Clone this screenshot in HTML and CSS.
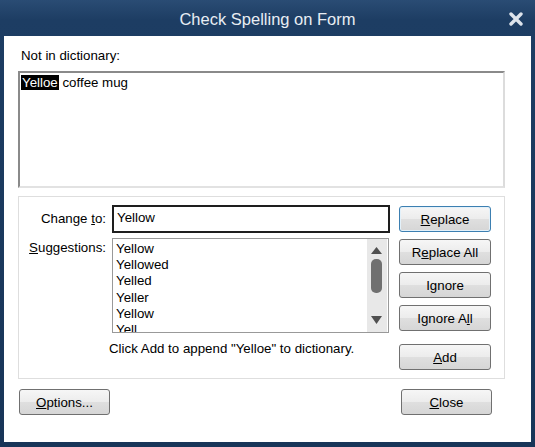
FILE: index.html
```html
<html>
	<head>
		<title>Check Spelling on Form</title>
		<link rel="stylesheet" href="styles.css">
	</head>
	<body>
		<div class="window">
			<div class="titlebar">
				<span></span>
				<span class="title">Check Spelling on Form</span>
				<svg class="close-x" width="16" height="14" viewBox="0 0 16 14">
					<path d="M3 2 L13 12 M13 2 L3 12" stroke="#dde3eb" stroke-width="3.4" stroke-linecap="round"/>
				</svg>
			</div>
			<div class="client">
				<div class="label-top">Not in dictionary:</div>
				<div class="sentence-box"><span class="hl">Yelloe</span> coffee mug</div>
				<div class="group">
					<div class="form-grid">
						<label class="lbl lbl-change">Change <u>t</u>o:</label>
						<div class="change-input">Yellow</div>
						<label class="lbl lbl-sugg"><u>S</u>uggestions:</label>
						<div class="sugg-list">
							<ul>
								<li>Yellow</li>
								<li>Yellowed</li>
								<li>Yelled</li>
								<li>Yeller</li>
								<li>Yellow</li>
								<li>Yell</li>
							</ul>
							<svg class="scrollbar" width="20" height="93" viewBox="0 0 20 93">
								<rect x="0" y="0" width="20" height="93" fill="#e8e8e8"/>
								<polygon points="4,15 9.5,8 15,15" fill="#505050"/>
								<rect x="4" y="20" width="11" height="34" rx="5" fill="#707070"/>
								<polygon points="4,77 15,77 9.5,85" fill="#505050"/>
							</svg>
						</div>
						<span></span>
						<div class="hint">Click Add to append "Yelloe" to dictionary.</div>
					</div>
					<div class="btn-col">
						<button class="btn btn-default"><u>R</u>eplace</button>
						<button class="btn">R<u>e</u>place All</button>
						<button class="btn">I<u>g</u>nore</button>
						<button class="btn">Ignore A<u>l</u>l</button>
						<button class="btn btn-add"><u>A</u>dd</button>
					</div>
				</div>
				<div class="bottom-row">
					<button class="btn btn-options"><u>O</u>ptions...</button>
					<button class="btn btn-close"><u>C</u>lose</button>
				</div>
			</div>
		</div>
	</body>
</html>
```

FILE: styles.css
```css
* {
	margin: 0;
	padding: 0;
	box-sizing: border-box;
}
body {
	background-color: #1b3a5e;
	font-family: "Liberation Sans", Arial, sans-serif;
	font-size: 13.3px;
	color: #000;
}
.window {
	width: 535px;
	height: 447px;
	background: linear-gradient(#2a4c74 0px, #1d3d63 20px, #183558 100%);
}
.titlebar {
	height: 36px;
	display: grid;
	grid-template-columns: 1fr auto 1fr;
	align-items: center;
	padding-top: 2px;
}
.title {
	color: #e8edf3;
	font-size: 16.5px;
}
.close-x {
	justify-self: end;
	margin-right: 11px;
}
.client {
	margin-left: 4px;
	width: 527px;
	height: 406px;
	background-color: #fff;
	padding: 12px 26px 0 14px;
}
.label-top {
	line-height: 16px;
	padding-left: 3px;
	margin-bottom: 7px;
}
.sentence-box {
	height: 117px;
	border: 2px solid #8a8a8a;
	border-right-color: #dcdcdc;
	border-bottom-color: #e2e2e2;
	padding: 2px 1px;
	line-height: 16px;
}
.hl {
	background-color: #000;
	color: #fff;
	padding: 0 1px;
}
.group {
	margin-top: 8px;
	height: 183px;
	border: 1px solid #dedede;
	display: flex;
	padding: 8px 13px 0 0;
}
.form-grid {
	display: grid;
	grid-template-columns: 87px 278px;
	grid-template-rows: 28px 95px auto;
	column-gap: 6px;
	row-gap: 5px;
	margin-right: 9px;
}
.lbl {
	text-align: right;
	line-height: 16px;
}
.lbl-change {
	align-self: center;
}
.lbl-sugg {
	padding-top: 2px;
}
.change-input {
	border: 2px solid #1e1e1e;
	padding: 2px 3px;
	line-height: 18px;
}
.sugg-list {
	border: 1px solid #999;
	display: flex;
	justify-content: space-between;
	overflow: hidden;
	width: 277px;
}
.sugg-list ul {
	list-style: none;
	padding: 2px 3px;
	line-height: 16.2px;
}
.scrollbar {
	margin: 0 1px 0 0;
}
.hint {
	margin: 3px 0 0 -3px;
	line-height: 16px;
}
.btn-col {
	display: flex;
	flex-direction: column;
	padding-top: 1px;
}
.btn {
	width: 92px;
	height: 26px;
	font-family: "Liberation Sans", Arial, sans-serif;
	font-size: 13.3px;
	color: #000;
	border: 1px solid #707070;
	border-radius: 3px;
	background: linear-gradient(#f6f6f6 0%, #ececec 50%, #dfdfdf 51%, #d6d6d6 100%);
	margin-bottom: 7px;
}
.btn-default {
	border-color: #3c7fb1;
	box-shadow: inset 0 0 0 1px #e3f1fa;
}
.btn-add {
	margin-top: 6px;
}
.bottom-row {
	display: flex;
	justify-content: space-between;
	margin-top: 10px;
}
.btn-options {
	width: 91px;
	margin-left: 1px;
}
.btn-close {
	width: 91px;
	margin-right: 13px;
}
```
